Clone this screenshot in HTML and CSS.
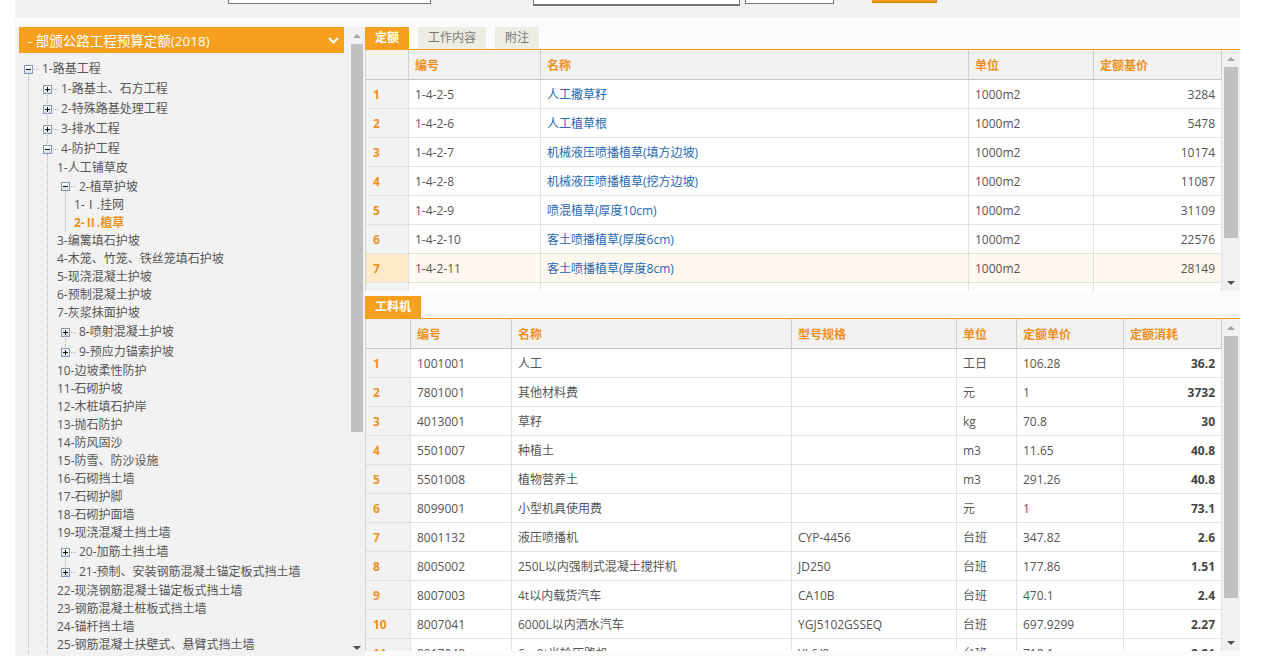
FILE: index.html
```html
<!DOCTYPE html>
<html lang="zh-CN">
<head>
<meta charset="utf-8">
<title>部颁公路工程预算定额</title>
<link rel="stylesheet" href="styles.css">
</head>
<body>
<div class="app">
  <div class="topbar">
    <div class="inp inp1"></div>
    <div class="inp inp2"></div>
    <div class="inp inp3"></div>
    <div class="btn"></div>
  </div>
  <div class="main">
    <aside class="side">
      <div class="side-content">
        <div class="side-head"><span>- 部颁公路工程预算定额(2018)</span><svg width="11" height="7" viewBox="0 0 11 7"><path d="M1 1l4.5 4.5L10 1" fill="none" stroke="#fff" stroke-width="2"/></svg></div>
        <ul class="tree">
          <li class="n0">
            <div class="row ir"><span class="ex"></span><span class="stub"></span><span>1-路基工程</span></div>
            <ul class="kids k0">
              <li class="conn"><div class="row ir"><span class="ex plus"></span><span class="stub"></span><span>1-路基土、石方工程</span></div></li>
              <li class="conn"><div class="row ir"><span class="ex plus"></span><span class="stub"></span><span>2-特殊路基处理工程</span></div></li>
              <li class="conn"><div class="row ir"><span class="ex plus"></span><span class="stub"></span><span>3-排水工程</span></div></li>
              <li>
                <div class="row ir"><span class="ex"></span><span class="stub"></span><span>4-防护工程</span></div>
                <ul class="kids">
                  <li class="lf2"><div class="row">1-人工铺草皮</div></li>
                  <li class="n2">
                    <div class="row ir2"><span class="ex"></span><span class="stub"></span><span>2-植草护坡</span></div>
                    <ul class="kids">
                      <li class="lf3"><div class="row">1-Ⅰ.挂网</div></li>
                      <li class="lf3"><div class="row sel">2-Ⅱ.植草</div></li>
                    </ul>
                  </li>
                  <li class="lf2"><div class="row">3-编篱填石护坡</div></li>
                  <li class="lf2"><div class="row">4-木笼、竹笼、铁丝笼填石护坡</div></li>
                  <li class="lf2"><div class="row">5-现浇混凝土护坡</div></li>
                  <li class="lf2"><div class="row">6-预制混凝土护坡</div></li>
                  <li class="lf2"><div class="row">7-灰浆抹面护坡</div></li>
                  <li class="n2 conn"><div class="row ir"><span class="ex plus"></span><span class="stub"></span><span>8-喷射混凝土护坡</span></div></li>
                  <li class="n2"><div class="row ir"><span class="ex plus"></span><span class="stub"></span><span>9-预应力锚索护坡</span></div></li>
                  <li class="lf2"><div class="row">10-边坡柔性防护</div></li>
                  <li class="lf2"><div class="row">11-石砌护坡</div></li>
                  <li class="lf2"><div class="row">12-木桩填石护岸</div></li>
                  <li class="lf2"><div class="row">13-抛石防护</div></li>
                  <li class="lf2"><div class="row">14-防风固沙</div></li>
                  <li class="lf2"><div class="row">15-防雪、防沙设施</div></li>
                  <li class="lf2"><div class="row">16-石砌挡土墙</div></li>
                  <li class="lf2"><div class="row">17-石砌护脚</div></li>
                  <li class="lf2"><div class="row">18-石砌护面墙</div></li>
                  <li class="lf2"><div class="row">19-现浇混凝土挡土墙</div></li>
                  <li class="n2 conn"><div class="row ir"><span class="ex plus"></span><span class="stub"></span><span>20-加筋土挡土墙</span></div></li>
                  <li class="n2"><div class="row ir"><span class="ex plus"></span><span class="stub"></span><span>21-预制、安装钢筋混凝土锚定板式挡土墙</span></div></li>
                  <li class="lf2"><div class="row">22-现浇钢筋混凝土锚定板式挡土墙</div></li>
                  <li class="lf2"><div class="row">23-钢筋混凝土桩板式挡土墙</div></li>
                  <li class="lf2"><div class="row">24-锚杆挡土墙</div></li>
                  <li class="lf2"><div class="row">25-钢筋混凝土扶壁式、悬臂式挡土墙</div></li>
                </ul>
              </li>
            </ul>
          </li>
        </ul>
      </div>
      <div class="vs vs-side"><div class="up"></div><div class="thumb th-side"></div><div class="gap"></div><div class="dn"></div></div>
    </aside>

    <section class="content">
      <div class="tabs">
        <div class="tab on">定额</div>
        <div class="tab">工作内容</div>
        <div class="tab">附注</div>
      </div>
      <div class="grid g1">
        <div class="gbody">
          <table class="tbl t1">
            <colgroup><col class="c43"><col class="c132"><col class="c428"><col class="c125"><col class="c128"></colgroup>
            <thead><tr><th></th><th>编号</th><th>名称</th><th>单位</th><th>定额基价</th></tr></thead>
            <tbody>
              <tr><td class="no">1</td><td>1-4-2-5</td><td class="lnk">人工撒草籽</td><td>1000m2</td><td class="r">3284</td></tr>
              <tr><td class="no">2</td><td>1-4-2-6</td><td class="lnk">人工植草根</td><td>1000m2</td><td class="r">5478</td></tr>
              <tr><td class="no">3</td><td>1-4-2-7</td><td class="lnk">机械液压喷播植草(填方边坡)</td><td>1000m2</td><td class="r">10174</td></tr>
              <tr><td class="no">4</td><td>1-4-2-8</td><td class="lnk">机械液压喷播植草(挖方边坡)</td><td>1000m2</td><td class="r">11087</td></tr>
              <tr><td class="no">5</td><td>1-4-2-9</td><td class="lnk">喷混植草(厚度10cm)</td><td>1000m2</td><td class="r">31109</td></tr>
              <tr><td class="no">6</td><td>1-4-2-10</td><td class="lnk">客土喷播植草(厚度6cm)</td><td>1000m2</td><td class="r">22576</td></tr>
              <tr class="hl"><td class="no">7</td><td>1-4-2-11</td><td class="lnk">客土喷播植草(厚度8cm)</td><td>1000m2</td><td class="r">28149</td></tr>
              <tr><td class="no"></td><td></td><td></td><td></td><td></td></tr>
            </tbody>
          </table>
        </div>
        <div class="vs"><div class="up"></div><div class="thumb th1"></div><div class="gap"></div><div class="dn"></div></div>
      </div>

      <div class="tabs tabs2">
        <div class="tab on">工料机</div>
      </div>
      <div class="grid g2">
        <div class="gbody">
          <table class="tbl t2">
            <colgroup><col class="c45"><col class="c101"><col class="c280"><col class="c165"><col class="c60"><col class="c107"><col class="c98"></colgroup>
            <thead><tr><th></th><th>编号</th><th>名称</th><th>型号规格</th><th>单位</th><th>定额单价</th><th>定额消耗</th></tr></thead>
            <tbody>
              <tr><td class="no">1</td><td>1001001</td><td>人工</td><td></td><td>工日</td><td>106.28</td><td class="r b">36.2</td></tr>
              <tr><td class="no">2</td><td>7801001</td><td>其他材料费</td><td></td><td>元</td><td>1</td><td class="r b">3732</td></tr>
              <tr><td class="no">3</td><td>4013001</td><td>草籽</td><td></td><td>kg</td><td>70.8</td><td class="r b">30</td></tr>
              <tr><td class="no">4</td><td>5501007</td><td>种植土</td><td></td><td>m3</td><td>11.65</td><td class="r b">40.8</td></tr>
              <tr><td class="no">5</td><td>5501008</td><td>植物营养土</td><td></td><td>m3</td><td>291.26</td><td class="r b">40.8</td></tr>
              <tr><td class="no">6</td><td>8099001</td><td>小型机具使用费</td><td></td><td>元</td><td>1</td><td class="r b">73.1</td></tr>
              <tr><td class="no">7</td><td>8001132</td><td>液压喷播机</td><td>CYP-4456</td><td>台班</td><td>347.82</td><td class="r b">2.6</td></tr>
              <tr><td class="no">8</td><td>8005002</td><td>250L以内强制式混凝土搅拌机</td><td>JD250</td><td>台班</td><td>177.86</td><td class="r b">1.51</td></tr>
              <tr><td class="no">9</td><td>8007003</td><td>4t以内载货汽车</td><td>CA10B</td><td>台班</td><td>470.1</td><td class="r b">2.4</td></tr>
              <tr><td class="no">10</td><td>8007041</td><td>6000L以内洒水汽车</td><td>YGJ5102GSSEQ</td><td>台班</td><td>697.9299</td><td class="r b">2.27</td></tr>
              <tr><td class="no">11</td><td>8017048</td><td>6～8t光轮压路机</td><td>YL6/8</td><td>台班</td><td>718.1</td><td class="r b">2.21</td></tr>
            </tbody>
          </table>
        </div>
        <div class="vs"><div class="up"></div><div class="thumb th2"></div><div class="gap"></div><div class="dn"></div></div>
      </div>
    </section>
  </div>
</div>
</body>
</html>
```

FILE: styles.css
```css
* { box-sizing: border-box; }
html, body { margin: 0; padding: 0; }
body {
  width: 1279px;
  height: 656px;
  overflow: hidden;
  background: #fff;
  font-family: "Open Sans", "Noto Sans CJK SC", sans-serif;
  font-size: 12px;
  color: #555;
}
ul { list-style: none; margin: 0; padding: 0; }

.app { margin-left: 15px; width: 1225px; }

/* top search bar (cut off at the top) */
.topbar {
  height: 17px;
  background: #f2f2f2;
  display: flex;
  align-items: flex-start;
  overflow: hidden;
}
.inp { flex: none; background: #fff; border: 1px solid #767676; margin-top: -20px; }
.inp1 { margin-left: 213px; width: 203px; height: 24px; }
.inp2 { margin-left: 102px; width: 207px; height: 26px; border-bottom-width: 2px; }
.inp3 { margin-left: 5px; width: 89px; height: 24px; }
.btn {
  flex: none;
  margin-left: 38px;
  width: 65px;
  height: 23px;
  margin-top: -20px;
  background: #f89c1b;
  border-bottom: 1px solid #d77c08;
  border-right: 1px solid #e58a10;
}

.main { display: flex; height: 639px; overflow: hidden; background: #fbfbfb; }

/* left tree panel */
.side {
  flex: none;
  width: 350px;
  height: 629px;
  margin-top: 10px;
  background: #f2f2f2;
  display: flex;
}
.side-content { width: 335px; padding-left: 4px; overflow: hidden; }
.side-head {
  height: 26px;
  width: 325px;
  background: #f7a01f;
  color: #fff;
  font-size: 13.5px;
  display: flex;
  align-items: center;
  justify-content: space-between;
  padding: 0 5px 0 9px;
  white-space: nowrap;
}
.tree { margin-top: 6px; padding-left: 5px; }
.row {
  display: flex;
  align-items: center;
  height: 18px;
  line-height: 16px;
  white-space: nowrap;
}
.row.ir { height: 20px; }
.row.ir2 { height: 19px; }
.ex {
  flex: none;
  position: relative;
  width: 9px;
  height: 9px;
  border: 1px solid #8799b2;
  background: linear-gradient(#ffffff, #d9dee7);
}
.ex::before {
  content: "";
  position: absolute;
  left: 1px;
  top: 3px;
  width: 5px;
  height: 1px;
  background: #111;
}
.ex.plus::after {
  content: "";
  position: absolute;
  left: 3px;
  top: 1px;
  width: 1px;
  height: 5px;
  background: #111;
}
.stub { flex: none; width: 5px; height: 0; border-top: 1px dotted #b0b0b0; margin: 0 3px 0 1px; }
.kids {
  margin-left: 4px;
  margin-top: -5px;
  padding-top: 5px;
  border-left: 1px dotted #b5b5b5;
}
.k0 { padding-left: 14px; }
.lf2 { padding-left: 9px; }
.n2 { padding-left: 13px; }
.lf3 { padding-left: 8px; }
.sel { color: #f0901e; font-weight: bold; }
.conn > .row { position: relative; }
.conn > .row::after {
  content: "";
  position: absolute;
  left: 4px;
  top: 14px;
  height: 11px;
  border-left: 1px dotted #b5b5b5;
}

/* scrollbars */
.vs {
  flex: none;
  width: 18px;
  background: #f1f1f1;
  display: flex;
  flex-direction: column;
  align-items: center;
}
.vs .up, .vs .dn {
  flex: none;
  width: 100%;
  height: 17px;
  display: flex;
  align-items: center;
  justify-content: center;
}
.vs .up::before {
  content: "";
  border-left: 4px solid transparent;
  border-right: 4px solid transparent;
  border-bottom: 4px solid #a3a3a3;
}
.vs .dn::before {
  content: "";
  border-left: 4px solid transparent;
  border-right: 4px solid transparent;
  border-top: 4px solid #505050;
}
.vs .thumb { flex: none; width: 14px; background: #c1c1c1; }
.vs .gap { flex: 1; }
.vs-side { width: 14px; }
.vs-side .thumb { width: 12px; }
.th-side { height: 388px; }
.th1 { height: 171px; }
.th2 { height: 262px; }

/* right content */
.content { flex: none; width: 875px; padding-top: 10px; }
.tabs {
  display: flex;
  gap: 9px;
  height: 23px;
  border-bottom: 1px solid #f7a01f;
}
.tab {
  height: 22px;
  line-height: 22px;
  padding: 0 10px;
  background: #eeede3;
  color: #777;
}
.tab.on { background: #f7a01f; color: #fff; font-weight: bold; }
.tabs2 { margin-top: 5px; }

.grid { display: flex; border-left: 1px solid #d6d6d6; }
.g1 { height: 241px; }
.g2 { height: 332px; }
.gbody { width: 856px; overflow: hidden; background: #fff; }

.tbl {
  width: 856px;
  table-layout: fixed;
  border-collapse: separate;
  border-spacing: 0;
}
.tbl th, .tbl td {
  padding: 1px 6px 0;
  text-align: left;
  vertical-align: middle;
  white-space: nowrap;
  overflow: hidden;
  line-height: 16px;
}
.tbl thead tr { height: 30px; }
.tbl tbody tr { height: 29px; }
.tbl th {
  padding-top: 3px;
  background: #f2f2f2;
  color: #f0901e;
  font-weight: bold;
  border-right: 1px solid #cfcfcf;
  border-bottom: 1px solid #c6c6c6;
}
.tbl td {
  border-right: 1px solid #e1e1e1;
  border-bottom: 1px solid #e1e1e1;
}
.tbl td.no { background: #f2f2f2; color: #f0901e; font-weight: bold; padding-left: 7px; }
.tbl td.r { text-align: right; }
.tbl td.b { font-weight: bold; color: #444; }
.tbl td.lnk { color: #1f68b3; }
.tbl tr.hl td { background: #fff8ee; }
.tbl tr.hl td.no { background: #ffe9c6; }

.c43 { width: 43px; }
.c132 { width: 132px; }
.c428 { width: 428px; }
.c125 { width: 125px; }
.c128 { width: 128px; }
.c45 { width: 45px; }
.c101 { width: 101px; }
.c280 { width: 280px; }
.c165 { width: 165px; }
.c60 { width: 60px; }
.c107 { width: 107px; }
.c98 { width: 98px; }
```
